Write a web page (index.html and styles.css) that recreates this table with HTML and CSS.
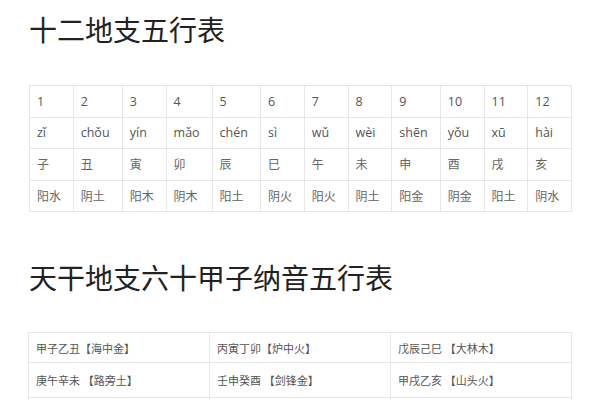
FILE: index.html
```html
<!DOCTYPE html>
<html lang="zh">
<head>
<meta charset="utf-8">
<link rel="stylesheet" href="styles.css">
</head>
<body>
<h1 class="title first">十二地支五行表</h1>
<table class="branches">
<tr><td>1</td><td>2</td><td>3</td><td>4</td><td>5</td><td>6</td><td>7</td><td>8</td><td>9</td><td>10</td><td>11</td><td>12</td></tr>
<tr><td>zǐ</td><td>chǒu</td><td>yín</td><td>mǎo</td><td>chén</td><td>sì</td><td>wǔ</td><td>wèi</td><td>shēn</td><td>yǒu</td><td>xū</td><td>hài</td></tr>
<tr class="cjk"><td>子</td><td>丑</td><td>寅</td><td>卯</td><td>辰</td><td>巳</td><td>午</td><td>未</td><td>申</td><td>酉</td><td>戌</td><td>亥</td></tr>
<tr class="cjk"><td>阳水</td><td>阴土</td><td>阳木</td><td>阴木</td><td>阳土</td><td>阴火</td><td>阳火</td><td>阴土</td><td>阳金</td><td>阴金</td><td>阳土</td><td>阴水</td></tr>
</table>
<h1 class="title second">天干地支六十甲子纳音五行表</h1>
<table class="nayin">
<tr class="r1"><td>甲子乙丑【海中金】</td><td>丙寅丁卯【炉中火】</td><td>戊辰己巳 【大林木】</td></tr>
<tr class="r2"><td>庚午辛未 【路旁土】</td><td>壬申癸酉 【剑锋金】</td><td>甲戌乙亥 【山头火】</td></tr>
<tr class="r3"><td></td><td></td><td></td></tr>
</table>
</body>
</html>
```
FILE: styles.css
```css
html, body {
  margin: 0;
  padding: 0;
  background: #fff;
}
body {
  padding-left: 29px;
  font-family: "Open Sans", "Noto Sans CJK SC", sans-serif;
  color: #555;
  overflow: hidden;
  height: 400px;
}
.title {
  font-family: "Noto Sans CJK SC", sans-serif;
  font-weight: 400;
  font-size: 28px;
  line-height: 34px;
  color: #222;
  margin: 0;
}
.title.first {
  margin-top: 12px;
  margin-bottom: 39px;
}
.title.second {
  margin-top: 48px;
  margin-bottom: 38px;
}
table {
  border-collapse: collapse;
}
td {
  border: 1px solid #e6e6e6;
  padding: 0 7px;
  text-align: left;
  vertical-align: middle;
  white-space: nowrap;
}
.branches {
  width: 543px;
  font-size: 12.5px;
}
.branches tr {
  height: 31.5px;
}
.branches tr.cjk td {
  font-size: 12px;
  color: #666;
}
.nayin {
  width: 544px;
  margin-left: -1px;
  table-layout: fixed;
  font-size: 11px;
  color: #555;
}
.nayin tr.r1 {
  height: 30px;
}
.nayin tr.r2 {
  height: 35px;
}
.nayin tr.r3 {
  height: 30px;
}
```
